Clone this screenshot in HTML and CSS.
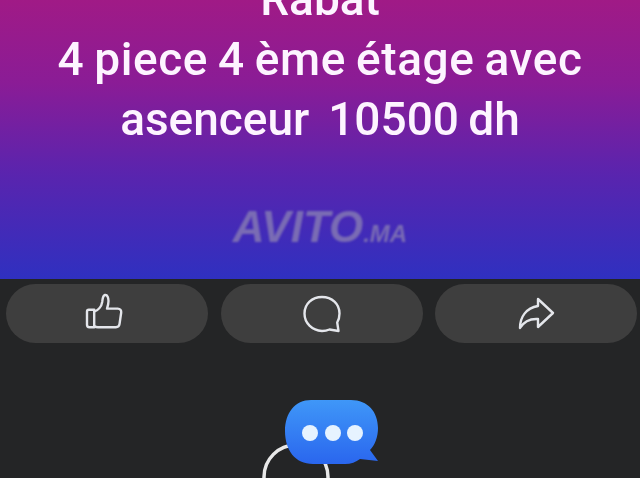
FILE: index.html
```html
<!DOCTYPE html>
<html lang="fr">
<head>
    <meta charset="UTF-8">
    <meta name="viewport" content="width=device-width, initial-scale=1.0">
    <title>Rabat - 4 piece</title>
    <link rel="stylesheet" href="styles.css">
</head>
<body>

<div class="post">
    <p class="post-text">Rabat<br><span class="post-line-wide">4 piece 4 ème étage avec</span><br>asenceur&nbsp; 10500 dh</p>
    <div class="watermark">AVITO<span class="watermark-tld">.MA</span></div>
</div>

<div class="actions">
    <button type="button" class="action" aria-label="Like">
        <svg class="icon-like" width="40" height="40" viewBox="0 0 40 40" fill="none" stroke="#e4e6eb" stroke-width="2.4" stroke-linejoin="round" stroke-linecap="round">
            <path d="M3 19.5c0-1 .8-1.800 1.800-1.800h5.400v17.500H5.400c-1.300 0-2.400-1-2.400-2.400z"/>
            <path d="M10.200 19.500c4-1 7.300-5 8-9.500.300-2.300.500-6.500 2.700-7 2.600-.500 3.600 3 3.600 6 0 3-.8 5.500-1.500 7.600h10.800c2.300 0 3.700 1.800 3.400 3.900l-1.700 11.600c-.3 2-1.700 3.100-3.500 3.100H14c-1.600 0-2.800-.5-3.800-1.100"/>
        </svg>
    </button>
    <button type="button" class="action" aria-label="Comment">
        <svg width="40" height="40" viewBox="0 0 40 40" fill="none" stroke="#e4e6eb" stroke-width="2.400" stroke-linejoin="round">
            <path d="M20 3c10 0 17.500 7 17.500 16.500 0 3.500-.8 6.500-2.300 9l1.300 8.500-9-1.500c-2.300 1-4.800 1.500-7.500 1.500C10 36.500 2.500 29 2.500 19.500 2.500 10 10 3 20 3z"/>
        </svg>
    </button>
    <button type="button" class="action" aria-label="Share">
        <svg width="40" height="40" viewBox="0 0 40 40" fill="none" stroke="#e4e6eb" stroke-width="2.400" stroke-linejoin="round">
            <path d="M22 5l15 14-15 14v-8c-8-.5-13.500 1.500-18 9 0-11 6-20 18-22z"/>
        </svg>
    </button>
</div>

<div class="empty-comments">
    <svg class="empty-icon" width="124" height="80" viewBox="0 0 124 80" fill="none">
        <defs>
            <linearGradient id="bubbleFill" x1="0" y1="0" x2="0" y2="1">
                <stop offset="0" stop-color="#3f97f8"/>
                <stop offset="1" stop-color="#2a66ee"/>
            </linearGradient>
        </defs>
        <circle cx="37" cy="79" r="32" stroke="#e8e8e8" stroke-width="3.500"/>
        <path d="M52 2h40c17 0 27 12 27 28 0 9-3 17-8 22l8 11-18-2c-4 3-9 5-15 5H54C36 66 26 52 26 33 26 15 36 2 52 2z" fill="url(#bubbleFill)"/>
        <circle cx="51" cy="35" r="8" fill="#e6f3ff"/>
        <circle cx="74" cy="35" r="8" fill="#e6f3ff"/>
        <circle cx="96" cy="35" r="8" fill="#e6f3ff"/>
    </svg>
</div>

</body>
</html>
```

FILE: styles.css
```css
html, body {
    margin: 0;
    height: 100%;
    overflow: hidden;
}
body {
    background-color: #242526;
    font-family: Roboto, "Liberation Sans", sans-serif;
}
.post {
    height: 279px;
    overflow: hidden;
    background: linear-gradient(180deg, #a01a86 0%, #8a1c96 30%, #5a24ae 62%, #2f30c0 100%);
    color: #fdf4ff;
    text-align: center;
}
.post-text {
    margin: -31px 0 0;
    font-size: 46px;
    font-weight: 500;
    line-height: 60px;
    word-spacing: -2px;
    white-space: nowrap;
    filter: blur(0.7px);
}
.post-line-wide {
    letter-spacing: 0.6px;
}
.watermark {
    margin-top: 53px;
    font-family: "Liberation Sans", sans-serif;
    font-size: 44px;
    font-weight: 700;
    font-style: italic;
    line-height: 50px;
    color: #7a6cb4;
    filter: blur(0.8px);
}
.watermark-tld {
    font-size: 24px;
}
.actions {
    display: flex;
    gap: 12.5px;
    padding: 5px 3px 0 6px;
}
.action {
    flex: 1;
    height: 59px;
    display: flex;
    align-items: center;
    justify-content: center;
    padding: 0;
    border: none;
    border-radius: 30px;
    background-color: #3e3e3e;
}
.action svg {
    filter: blur(0.4px);
}
.action .icon-like {
    margin: -3px 6px 0 0;
}
.empty-comments {
    display: flex;
    justify-content: center;
    padding-top: 55px;
}
.empty-icon {
    margin-left: 2px;
    filter: blur(0.6px);
}
```
